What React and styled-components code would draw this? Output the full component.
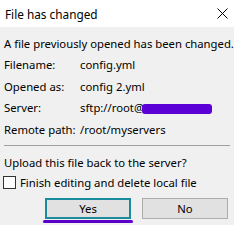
import React from "react";
import styled, { createGlobalStyle } from "styled-components";

const Global = createGlobalStyle`
  html, body {
    margin: 0;
    padding: 0;
    background: #f0f0f0;
  }
  body {
    font-family: "Noto Sans", "Open Sans", sans-serif;
    font-size: 11.3px;
    color: #000;
  }
`;

const Dialog = styled.div`
  width: 234px;
  height: 225px;
  background: #f0f0f0;
  display: flex;
  flex-direction: column;
  overflow: hidden;
`;

const TitleBar = styled.div`
  height: 27px;
  background: #fff;
  display: flex;
  align-items: center;
  justify-content: space-between;
  padding: 0 6px 0 5px;
  font-size: 11.8px;
`;

const Close = styled.svg`
  width: 11px;
  height: 11px;
`;

const Body = styled.div`
  padding: 6px 4px 0 4px;
  display: flex;
  flex-direction: column;
`;

const Line = styled.div`
  height: ${(p) => p.h || 21}px;
  line-height: ${(p) => p.h || 21}px;
  white-space: nowrap;
`;

const Row = styled.div`
  display: grid;
  grid-template-columns: 76px 1fr;
  height: 21.6px;
  line-height: 21.6px;
  white-space: nowrap;
`;

const Redact = styled.span`
  display: inline-block;
  width: 70px;
  height: 10px;
  background: #5a00d6;
  border-radius: 3px;
  vertical-align: middle;
  margin-left: -2px;
`;

const Separator = styled.hr`
  border: none;
  border-top: 1px solid #a0a0a0;
  margin: 5px 0 8px 0;
  width: 226px;
`;

const Check = styled.label`
  display: flex;
  align-items: center;
  gap: 4px;
  height: 20px;
  margin-left: -1px;
`;

const Box = styled.span`
  width: 11px;
  height: 11px;
  border: 1px solid #333;
  background: #fff;
`;

const Buttons = styled.div`
  display: flex;
  gap: 11px;
  margin-top: 6px;
  padding-left: 41px;
`;

const Button = styled.div`
  position: relative;
  width: 86px;
  height: 21px;
  box-sizing: border-box;
  background: #e1e1e1;
  border: ${(p) => (p.focused ? "2px solid #1a8b9c" : "1px solid #adadad")};
  display: flex;
  align-items: center;
  justify-content: center;
`;

const Underline = styled.span`
  position: absolute;
  left: -4px;
  right: -4px;
  bottom: -6px;
  height: 3px;
  background: #5a00c8;
  border-radius: 2px;
`;

export default function App() {
  return (
    <>
      <Global />
      <Dialog>
        <TitleBar>
          <span>File has changed</span>
          <Close viewBox="0 0 11 11">
            <path d="M0.5 0.5 L10.5 10.5 M10.5 0.5 L0.5 10.5" stroke="#000" strokeWidth="1" />
          </Close>
        </TitleBar>
        <Body>
          <Line h={21}>A file previously opened has been changed.</Line>
          <Row>
            <span>Filename:</span>
            <span>config.yml</span>
          </Row>
          <Row>
            <span>Opened as:</span>
            <span>config 2.yml</span>
          </Row>
          <Row>
            <span>Server:</span>
            <span>
              sftp://root@<Redact />
            </span>
          </Row>
          <Row>
            <span>Remote path:</span>
            <span>/root/myservers</span>
          </Row>
          <Separator />
          <Line h={18}>Upload this file back to the server?</Line>
          <Check>
            <Box />
            <span>Finish editing and delete local file</span>
          </Check>
          <Buttons>
            <Button focused>
              Yes
              <Underline />
            </Button>
            <Button>No</Button>
          </Buttons>
        </Body>
      </Dialog>
    </>
  );
}
